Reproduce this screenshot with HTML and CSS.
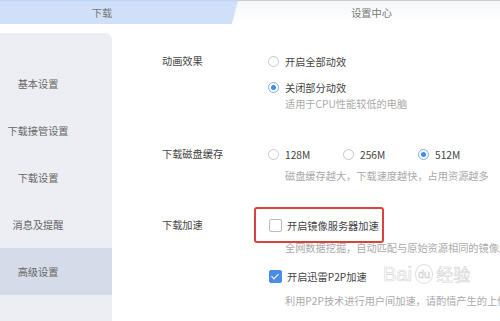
FILE: index.html
```html
<!DOCTYPE html>
<html lang="zh-CN">
<head>
    <meta charset="UTF-8">
    <meta name="viewport" content="width=device-width, initial-scale=1.0">
    <title>设置中心</title>
    <link rel="stylesheet" href="styles.css">
</head>
<body>
    <div class="tab-bar">
        <div class="tab tab-download">下载</div>
        <div class="tab tab-settings">设置中心</div>
    </div>

    <div class="main">
        <div class="sidebar">
            <div class="side-item">基本设置</div>
            <div class="side-item">下载接管设置</div>
            <div class="side-item">下载设置</div>
            <div class="side-item">消息及提醒</div>
            <div class="side-item active">高级设置</div>
        </div>

        <div class="content">
            <div class="row row-anim">
                <div class="label">动画效果</div>
                <div class="options">
                    <div class="opt"><span class="radio"></span>开启全部动效</div>
                    <div class="opt"><span class="radio checked"></span>关闭部分动效</div>
                    <div class="desc desc-anim">适用于CPU性能较低的电脑</div>
                </div>
            </div>

            <div class="row row-cache">
                <div class="label">下载磁盘缓存</div>
                <div class="options">
                    <div class="opt-group">
                        <div class="opt inline"><span class="radio"></span>128M</div>
                        <div class="opt inline"><span class="radio"></span>256M</div>
                        <div class="opt inline"><span class="radio checked"></span>512M</div>
                    </div>
                    <div class="desc desc-cache">磁盘缓存越大，下载速度越快，占用资源越多</div>
                </div>
            </div>

            <div class="row row-speed">
                <div class="label">下载加速</div>
                <div class="options">
                    <div class="opt marked"><span class="check"></span>开启镜像服务器加速</div>
                    <div class="desc desc-mirror">全网数据挖掘，自动匹配与原始资源相同的镜像服务器进行加速</div>
                    <div class="opt opt-p2p"><span class="check checked"></span>开启迅雷P2P加速</div>
                    <div class="desc desc-p2p">利用P2P技术进行用户间加速，请酌情产生的上传流量</div>
                </div>
            </div>
        </div>
    </div>

    <div class="watermark"><span class="wm-latin">Bai</span><span class="wm-du">du</span><span class="wm-cn">经验</span></div>
</body>
</html>
```

FILE: styles.css
```css
body {
    margin: 0;
    width: 500px;
    height: 321px;
    overflow: hidden;
    font-family: "Noto Sans CJK SC", "Noto Sans", sans-serif;
    font-size: 10.2px;
    color: #555;
    background-color: #fff;
    position: relative;
}
.tab-bar {
    display: flex;
    height: 24px;
    background-color: #fff;
}
.tab {
    display: flex;
    align-items: center;
    justify-content: center;
    height: 24px;
    color: #777;
}
.tab-download {
    width: 238px;
    flex-shrink: 0;
    margin-right: -6px;
    background: linear-gradient(#b9d3f5 0, #cfe0f8 2px, #cfe0f8 100%);
    clip-path: polygon(0 0, 100% 0, calc(100% - 6px) 100%, 0 100%);
    padding-right: 34px;
    box-sizing: border-box;
}
.tab-settings {
    flex: 1;
    box-sizing: border-box;
    border-top: 1px solid #c9ccd2;
    background: linear-gradient(#f6f7f9, #fff);
    padding-left: 17px;
    padding-right: 6px;
}
.main {
    display: flex;
    margin-top: 9px;
    height: 288px;
}
.sidebar {
    width: 112px;
    flex-shrink: 0;
    height: 288px;
    background-color: #eceef3;
    border-top-right-radius: 7px;
    padding-top: 27px;
    box-sizing: border-box;
}
.side-item {
    height: 47px;
    line-height: 47px;
    text-align: center;
    padding-right: 36px;
    color: #666;
    white-space: nowrap;
}
.side-item.active {
    background-color: #d6dbea;
}
.content {
    flex: 1;
    min-width: 0;
    overflow: hidden;
    padding-left: 50px;
    padding-top: 15px;
}
.row {
    display: flex;
}
.label {
    width: 106px;
    flex-shrink: 0;
    line-height: 26px;
    color: #444;
}
.options {
    display: flex;
    flex-direction: column;
}
.opt {
    display: flex;
    align-items: center;
    height: 26px;
    color: #444;
    white-space: nowrap;
}
.opt-group {
    display: flex;
}
.opt.inline {
    width: 75px;
}
.radio {
    width: 9px;
    height: 9px;
    flex-shrink: 0;
    border: 1px solid #c4c7cc;
    border-radius: 50%;
    margin-right: 6px;
    position: relative;
    background-color: #fff;
}
.radio.checked {
    border-color: #7eb0ee;
}
.radio.checked::after {
    content: "";
    position: absolute;
    left: 2px;
    top: 2px;
    width: 5px;
    height: 5px;
    border-radius: 50%;
    background-color: #3f8ceb;
}
.check {
    width: 11px;
    height: 11px;
    flex-shrink: 0;
    border: 1px solid #b8bcc3;
    border-radius: 2px;
    margin-left: 1px;
    margin-right: 5px;
    position: relative;
    background-color: #fff;
}
.check.checked {
    background-color: #4a8de6;
    border-color: #4a8de6;
}
.check.checked::after {
    content: "";
    position: absolute;
    left: 3px;
    top: 1px;
    width: 3px;
    height: 6px;
    border-right: 1.5px solid #fff;
    border-bottom: 1.5px solid #fff;
    transform: rotate(45deg);
}
.marked {
    position: relative;
}
.marked::before {
    content: "";
    position: absolute;
    left: -14px;
    top: -5px;
    width: 126px;
    height: 32px;
    border: 2px solid #d8443b;
    border-radius: 3px;
}
.desc {
    line-height: 14px;
    padding-left: 17px;
    color: #aaa;
    white-space: nowrap;
}
.desc-anim {
    margin-top: -3px;
}
.row-cache {
    margin-top: 30px;
}
.desc-cache {
    margin-top: 2px;
}
.row-speed {
    margin-top: 29px;
}
.desc-mirror {
    margin-top: 3px;
}
.opt-p2p {
    margin-top: 8px;
}
.desc-p2p {
    margin-top: 5px;
}
.watermark {
    position: absolute;
    left: 383px;
    top: 264px;
    display: flex;
    align-items: flex-end;
    gap: 3px;
    color: transparent;
    -webkit-text-stroke: 0.6px #d4d4d4;
    font-family: "Liberation Sans", sans-serif;
}
.wm-latin {
    font-size: 20px;
    line-height: 20px;
}
.wm-du {
    font-size: 11px;
    line-height: 14px;
    border: 1px solid #ddd;
    border-radius: 50%;
    padding: 2px 2px;
    -webkit-text-stroke: 0.5px #ccc;
}
.wm-cn {
    font-family: "Noto Sans CJK SC", sans-serif;
    font-size: 17px;
    line-height: 20px;
}
```
